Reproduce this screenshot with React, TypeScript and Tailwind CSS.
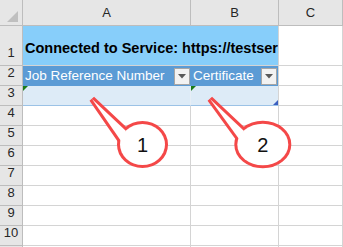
import React from "react";

const font = { fontFamily: '"Liberation Sans", Arial, sans-serif' };

function FilterButton() {
    return (
        <div className="ml-auto mr-px flex h-[17px] w-4 items-center justify-center border border-[#a6a6a6] bg-[#f2f2f2]">
            <svg width="8" height="5" viewBox="0 0 8 5">
                <path d="M0 0 H8 L4 4.5 Z" fill="#595959" />
            </svg>
        </div>
    );
}

function GreenMark() {
    return (
        <svg className="absolute left-0 top-0" width="6" height="6" viewBox="0 0 6 6">
            <path d="M0 0 H5 L0 5 Z" fill="#1a7a1a" />
        </svg>
    );
}

function Callout({ cx, cy, rx, ry, tip, base, label }: { cx: number; cy: number; rx: number; ry: number; tip: [number, number]; base: [number, number][]; label: string }) {
    const wedge = `M${tip[0]} ${tip[1]} L${base[0][0]} ${base[0][1]} L${base[1][0]} ${base[1][1]} Z`;
    return (
        <g>
            <path d={wedge} fill="#f44848" stroke="#f44848" strokeWidth="6" strokeLinejoin="miter" />
            <ellipse cx={cx} cy={cy} rx={rx} ry={ry} fill="#f44848" stroke="#f44848" strokeWidth="6" />
            <path d={wedge} fill="white" />
            <ellipse cx={cx} cy={cy} rx={rx} ry={ry} fill="white" />
            <text x={cx} y={cy + 7} textAnchor="middle" fontSize="20" fill="#111" style={font}>
                {label}
            </text>
        </g>
    );
}

export default function App() {
    const rows = [4, 5, 6, 7, 8, 9, 10];
    const head = "bg-[#e6e6e6] border-r border-b border-[#bdbdbd] text-[#262626] text-[13px]";
    const rowHead = "bg-[#e6e6e6] border-r border-b border-[#bdbdbd] text-[#262626] text-[13px] flex items-end justify-center pb-[3px]";
    const cell = "border-r border-b border-[#d4d4d4] bg-white";

    return (
        <div className="relative h-[247px] w-[343px] overflow-hidden bg-white" style={font}>
            <div className="grid grid-cols-[23px_168px_88px_64px]">
                {/* column headers */}
                <div className={`${head} relative h-[26px]`}>
                    <svg className="absolute left-0 top-0" width="22" height="25" viewBox="0 0 22 25">
                        <path d="M7 22 H18 V11 Z" fill="#bfbfbf" />
                    </svg>
                </div>
                <div className={`${head} flex h-[26px] items-center justify-center`}>A</div>
                <div className={`${head} flex h-[26px] items-center justify-center`}>B</div>
                <div className={`${head} flex h-[26px] items-center justify-center`}>C</div>

                {/* row 1 */}
                <div className={`${rowHead} h-10`}>1</div>
                <div className="col-span-2 flex h-10 items-end overflow-hidden whitespace-nowrap border-r border-b border-[#d4d4d4] bg-[#87cefa] pb-[5px] pl-[2px] text-[14.5px] font-bold text-black">
                    Connected to Service: https://testser
                </div>
                <div className={`${cell} h-10`} />

                {/* row 2 */}
                <div className={`${rowHead} h-5`}>2</div>
                <div className="flex h-5 items-center bg-[#5b9bd5] pl-[2px] text-[13.5px] text-white">
                    <span className="whitespace-nowrap">Job Reference Number</span>
                    <FilterButton />
                </div>
                <div className="flex h-5 items-center border-r border-[#d4d4d4] bg-[#5b9bd5] pl-[2px] text-[13.5px] text-white">
                    <span className="whitespace-nowrap">Certificate</span>
                    <FilterButton />
                </div>
                <div className={`${cell} h-5`} />

                {/* row 3 */}
                <div className={`${rowHead} h-5`}>3</div>
                <div className="relative h-5 border-r border-b border-r-[#e6eef6] border-b-[#9bc2e6] bg-[#ddebf7]">
                    <GreenMark />
                </div>
                <div className="relative h-5 border-r border-b border-r-[#d4d4d4] border-b-[#9bc2e6] bg-[#ddebf7]">
                    <GreenMark />
                    <svg className="absolute bottom-0 right-0" width="5" height="5" viewBox="0 0 5 5">
                        <path d="M5 0 V5 H0 Z" fill="#3b5fc0" />
                    </svg>
                </div>
                <div className={`${cell} h-5`} />

                {rows.map((r) => (
                    <React.Fragment key={r}>
                        <div className={`${rowHead} h-5`}>{r}</div>
                        <div className={`${cell} h-5`} />
                        <div className={`${cell} h-5`} />
                        <div className={`${cell} h-5`} />
                    </React.Fragment>
                ))}
                {/* next row, only its top edge shows */}
                <div className={`${rowHead} h-5`} />
                <div className={`${cell} h-5`} />
                <div className={`${cell} h-5`} />
                <div className={`${cell} h-5`} />
            </div>

            <svg className="pointer-events-none absolute left-0 top-0" width="343" height="247" viewBox="0 0 343 247">
                <Callout cx={142.5} cy={144.5} rx={22.5} ry={20.5} tip={[92, 99]} base={[[126, 131], [121, 141]]} label="1" />
                <Callout cx={262.8} cy={144.5} rx={25.5} ry={20.8} tip={[210, 99]} base={[[244, 131], [239, 139]]} label="2" />
            </svg>
        </div>
    );
}
